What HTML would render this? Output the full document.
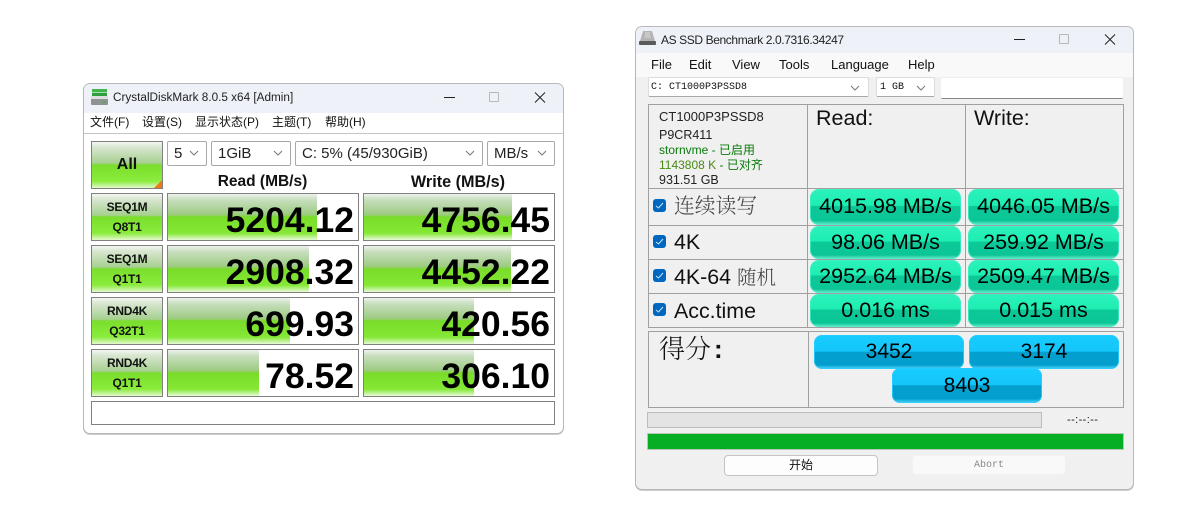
<!DOCTYPE html>
<html><head><meta charset="utf-8"><style>
html,body{margin:0;padding:0;background:#fff;width:1200px;height:518px;overflow:hidden}
body{position:relative;font-family:"Liberation Sans","Noto Sans CJK SC",sans-serif;color:#000}
div,span.a,svg{position:absolute;box-sizing:border-box}
.t{white-space:nowrap}
.combo{background:#fff;border:1px solid #a8a8a8;border-radius:2px;font-size:15px;color:#222;line-height:23px;padding-left:6px;white-space:nowrap;height:25px;top:141px}
.chev{width:10px;height:6px;top:8px;right:7px}
.lab{left:91px;width:72px;height:48px;border:1px solid #808080;background:linear-gradient(#f4f6f2 0,#d8e6d0 12%,#a6d090 46%,#7ade2c 50%,#8aec3c 85%,#e4f8d0 100%);text-align:center;font-size:12px;font-weight:bold;color:#111;line-height:20px;padding-top:3px;letter-spacing:-.25px}
.cell{height:48px;width:192px;border:1px solid #808080;background:#fff;overflow:hidden}
.bar{left:0;top:0;bottom:0;background:linear-gradient(#eef3ec 0,#c9dfc0 12%,#9ccb80 45%,#78dc28 50%,#84e834 85%,#e8fad8 100%)}
.num{right:4px;top:6px;font-size:35.5px;font-weight:bold;line-height:40px;color:#000;white-space:nowrap}
.tb{background:#f0f0f0;border:1px solid #a0a0a0}
.g{width:150px;height:36px;border-radius:9px;background:linear-gradient(#2cf2bb 0,#1eeeb2 46%,#0cc998 48%,#0bc596 88%,#6ff0cf 100%);box-shadow:inset 0 0 0 1px rgba(70,240,200,.7);text-align:center;font-size:21.5px;line-height:35px;color:#000;white-space:nowrap}
.b{width:150px;height:34px;border-radius:8px;background:linear-gradient(#18ccff 0,#14c6fa 48%,#03a0cf 50%,#039ecd 88%,#4fd8ff 100%);box-shadow:inset 0 0 0 1px rgba(40,205,255,.8);text-align:center;font-size:21px;line-height:33px;color:#000}
.cb{left:653px;width:13px;height:13px;border-radius:3px;background:#0067c0}
.rl{left:674px;font-size:21.4px;line-height:24px;color:#111;white-space:nowrap}
.s{font-family:"Noto Serif CJK SC",serif;color:#444;font-weight:300}
.m{top:57px;font-size:13px;line-height:16px;color:#111}
.cm{top:113px;font-size:12px;line-height:18px;color:#111;white-space:nowrap}
</style></head><body>

<!-- CrystalDiskMark -->
<div style="left:83px;top:83px;width:481px;height:351px;background:#fff;border:1px solid #b8b8b8;border-radius:7px;box-shadow:0 1px 0 #ccc;overflow:hidden">
<div style="left:0;top:0;width:100%;height:29px;background:#eef2f8"></div>
<div style="left:0;top:49px;width:100%;height:1px;background:#c4c4c4"></div>
</div>
<svg style="left:91px;top:89px" width="17" height="17" viewBox="0 0 17 17"><rect x="1" y="0" width="15" height="3" fill="#3fb54a"/><rect x="1" y="3" width="15" height="1" fill="#a8dcae"/><rect x="1" y="4" width="15" height="3" fill="#2f9e3e"/><rect x="0" y="7" width="17" height="9" rx="1" fill="#8f9492"/><rect x="0" y="7" width="17" height="3" fill="#dcdfdd"/><rect x="12" y="12" width="3" height="2" fill="#43b649"/></svg>
<div class="t" style="left:113px;top:90px;font-size:11.750px;line-height:16px;color:#222">CrystalDiskMark 8.0.5 x64 [Admin]</div>
<div style="left:444px;top:97px;width:11px;height:1px;background:#222"></div>
<div style="left:489px;top:92px;width:10px;height:10px;border:1px solid #b8b8b8;border-radius:1px"></div>
<svg style="left:534px;top:92px" width="12" height="11" viewBox="0 0 12 11"><path d="M1 .5 11 10.5M11 .5 1 10.5" stroke="#222" stroke-width="1" fill="none"/></svg>
<div class="cm" style="left:90px">文件(F)</div>
<div class="cm" style="left:142px">设置(S)</div>
<div class="cm" style="left:195px">显示状态(P)</div>
<div class="cm" style="left:272px">主题(T)</div>
<div class="cm" style="left:325px">帮助(H)</div>

<div class="lab" style="top:141px;font-size:16px;line-height:46px;padding:0;color:#111;letter-spacing:0">All</div>
<svg style="left:153px;top:179px" width="10" height="10"><path d="M9 1V9H1Z" fill="#f07818"/></svg>

<div class="combo" style="left:167px;width:40px">5<svg class="chev" viewBox="0 0 10 6"><path d="M1 1 5 5 9 1" stroke="#777" fill="none"/></svg></div>
<div class="combo" style="left:211px;width:80px">1GiB<svg class="chev" viewBox="0 0 10 6"><path d="M1 1 5 5 9 1" stroke="#777" fill="none"/></svg></div>
<div class="combo" style="left:295px;width:188px">C: 5% (45/930GiB)<svg class="chev" viewBox="0 0 10 6"><path d="M1 1 5 5 9 1" stroke="#777" fill="none"/></svg></div>
<div class="combo" style="left:487px;width:68px">MB/s<svg class="chev" viewBox="0 0 10 6"><path d="M1 1 5 5 9 1" stroke="#777" fill="none"/></svg></div>

<div class="t" style="left:166.500px;width:192px;top:172px;text-align:center;font-size:15.500px;font-weight:bold;line-height:20px;color:#111">Read (MB/s)</div>
<div class="t" style="left:362px;width:192px;top:172px;text-align:center;font-size:16.200px;font-weight:bold;line-height:20px;color:#111">Write (MB/s)</div>

<div class="lab" style="top:193px">SEQ1M<br>Q8T1</div>
<div class="cell" style="left:167px;top:193px"><div class="bar" style="width:149px"></div><div class="num">5204.12</div></div>
<div class="cell" style="left:363px;top:193px"><div class="bar" style="width:148px"></div><div class="num">4756.45</div></div>

<div class="lab" style="top:245px">SEQ1M<br>Q1T1</div>
<div class="cell" style="left:167px;top:245px"><div class="bar" style="width:141px"></div><div class="num">2908.32</div></div>
<div class="cell" style="left:363px;top:245px"><div class="bar" style="width:147px"></div><div class="num">4452.22</div></div>

<div class="lab" style="top:297px">RND4K<br>Q32T1</div>
<div class="cell" style="left:167px;top:297px"><div class="bar" style="width:122px"></div><div class="num">699.93</div></div>
<div class="cell" style="left:363px;top:297px"><div class="bar" style="width:110px"></div><div class="num">420.56</div></div>

<div class="lab" style="top:349px">RND4K<br>Q1T1</div>
<div class="cell" style="left:167px;top:349px"><div class="bar" style="width:91px"></div><div class="num">78.52</div></div>
<div class="cell" style="left:363px;top:349px"><div class="bar" style="width:110px"></div><div class="num">306.10</div></div>

<div style="left:91px;top:401px;width:464px;height:24px;border:1px solid #808080;background:#fff"></div>

<!-- AS SSD -->
<div style="left:635px;top:26px;width:499px;height:464px;background:#f0f0f0;border:1px solid #b8b8b8;border-radius:7px;box-shadow:0 1px 0 #ccc;overflow:hidden">
<div style="left:0;top:0;width:100%;height:26px;background:#eef2f8"></div>
<div style="left:0;top:26px;width:100%;height:24px;background:#f9f9f9"></div>
</div>
<svg style="left:639px;top:31px" width="17" height="14" viewBox="0 0 17 14"><path d="M4 0H13L16 10H1Z" fill="#b4b4b4"/><path d="M6 2h5M6 4h5M5.500 6h6" stroke="#dcdcdc" stroke-width="1"/><rect x="0" y="10" width="17" height="4" rx="1" fill="#5a5a5a"/></svg>
<div class="t" style="left:661px;top:32px;font-size:12px;line-height:16px;color:#222;letter-spacing:-.39px">AS SSD Benchmark 2.0.7316.34247</div>
<div style="left:1014px;top:39px;width:11px;height:1px;background:#222"></div>
<div style="left:1059px;top:34px;width:10px;height:10px;border:1px solid #b8b8b8;border-radius:1px"></div>
<svg style="left:1104px;top:34px" width="12" height="11" viewBox="0 0 12 11"><path d="M1 .5 11 10.500M11 .5 1 10.500" stroke="#222" fill="none"/></svg>
<div class="m" style="left:651px">File</div>
<div class="m" style="left:689px">Edit</div>
<div class="m" style="left:732px">View</div>
<div class="m" style="left:779px">Tools</div>
<div class="m" style="left:831px">Language</div>
<div class="m" style="left:908px">Help</div>

<div class="t" style="left:648px;top:77px;width:221px;height:20px;background:#fff;border:1px solid #dcdcdc;border-bottom-color:#a8a8a8;border-radius:2px;font-family:'Liberation Mono',monospace;font-size:10px;line-height:19px;padding-left:2px;color:#111">C: CT1000P3PSSD8<svg class="chev" style="top:7px;right:8px" viewBox="0 0 10 6"><path d="M1 1 5 5 9 1" stroke="#777" fill="none"/></svg></div>
<div class="t" style="left:876px;top:77px;width:59px;height:20px;background:#fff;border:1px solid #dcdcdc;border-bottom-color:#a8a8a8;border-radius:2px;font-family:'Liberation Mono',monospace;font-size:10px;line-height:19px;padding-left:3px;color:#111">1 GB<svg class="chev" style="top:7px;right:8px" viewBox="0 0 10 6"><path d="M1 1 5 5 9 1" stroke="#777" fill="none"/></svg></div>
<div style="left:941px;top:78px;width:182px;height:21px;background:#fff;border-bottom:1px solid #888;border-radius:2px"></div>

<div class="tb" style="left:648px;top:104px;width:160px;height:85px"></div>
<div class="tb" style="left:807px;top:104px;width:159px;height:85px"></div>
<div class="tb" style="left:965px;top:104px;width:159px;height:85px"></div>
<div class="t" style="left:659px;top:109px;font-size:13px;line-height:16px;color:#222">CT1000P3PSSD8</div>
<div class="t" style="left:659px;top:127px;font-size:12.500px;line-height:16px;color:#222">P9CR411</div>
<div class="t" style="left:659px;top:143px;font-size:12px;line-height:15px;color:#0a7a0a">stornvme - 已启用</div>
<div class="t" style="left:659px;top:158px;font-size:12px;line-height:15px;color:#0a7a0a"><span style="color:#4a8a14">1143808 K</span> - 已对齐</div>
<div class="t" style="left:659px;top:172px;font-size:12.500px;line-height:16px;color:#222">931.51 GB</div>
<div class="t" style="left:816px;top:105px;font-size:21.500px;line-height:26px;color:#111">Read:</div>
<div class="t" style="left:974px;top:105px;font-size:21.500px;line-height:26px;color:#111">Write:</div>

<div class="tb" style="left:648px;top:188px;width:160px;height:38px"></div>
<div class="tb" style="left:807px;top:188px;width:159px;height:38px"></div>
<div class="tb" style="left:965px;top:188px;width:159px;height:38px"></div>
<div class="tb" style="left:648px;top:225px;width:160px;height:35px"></div>
<div class="tb" style="left:807px;top:225px;width:159px;height:35px"></div>
<div class="tb" style="left:965px;top:225px;width:159px;height:35px"></div>
<div class="tb" style="left:648px;top:259px;width:160px;height:35px"></div>
<div class="tb" style="left:807px;top:259px;width:159px;height:35px"></div>
<div class="tb" style="left:965px;top:259px;width:159px;height:35px"></div>
<div class="tb" style="left:648px;top:293px;width:160px;height:35px"></div>
<div class="tb" style="left:807px;top:293px;width:159px;height:35px"></div>
<div class="tb" style="left:965px;top:293px;width:159px;height:35px"></div>

<div class="cb" style="top:199px"></div><div class="cb" style="top:235px"></div><div class="cb" style="top:269px"></div><div class="cb" style="top:303px"></div>
<svg style="left:655px;top:201px" width="9" height="9"><path d="M1 5 3.500 7 8 2" stroke="#cfe4f7" fill="none"/></svg>
<svg style="left:655px;top:237px" width="9" height="9"><path d="M1 5 3.500 7 8 2" stroke="#cfe4f7" fill="none"/></svg>
<svg style="left:655px;top:271px" width="9" height="9"><path d="M1 5 3.500 7 8 2" stroke="#cfe4f7" fill="none"/></svg>
<svg style="left:655px;top:305px" width="9" height="9"><path d="M1 5 3.500 7 8 2" stroke="#cfe4f7" fill="none"/></svg>
<div class="rl s" style="top:192px;font-size:20.800px">连续读写</div>
<div class="rl" style="top:230px">4K</div>
<div class="rl" style="top:264px">4K-64 <span class="s" style="font-size:19.500px">随机</span></div>
<div class="rl" style="top:299px">Acc.time</div>

<div class="g" style="left:810px;top:189px;width:151px">4015.98 MB/s</div>
<div class="g" style="left:968px;top:189px;width:151px">4046.05 MB/s</div>
<div class="g" style="left:810px;top:226px;width:151px;height:33px;line-height:33px">98.06 MB/s</div>
<div class="g" style="left:968px;top:226px;width:151px;height:33px;line-height:33px">259.92 MB/s</div>
<div class="g" style="left:810px;top:260px;width:151px;height:33px;line-height:33px">2952.64 MB/s</div>
<div class="g" style="left:968px;top:260px;width:151px;height:33px;line-height:33px">2509.47 MB/s</div>
<div class="g" style="left:810px;top:294px;width:151px;height:33px;line-height:33px">0.016 ms</div>
<div class="g" style="left:968px;top:294px;width:151px;height:33px;line-height:33px">0.015 ms</div>

<div class="tb" style="left:648px;top:331px;width:161px;height:77px"></div>
<div class="tb" style="left:808px;top:331px;width:316px;height:77px"></div>
<div class="t s" style="left:659px;top:328px;font-size:26px;line-height:40px;color:#111">得分<span style="font-family:'Liberation Sans',sans-serif;font-weight:bold;margin-left:3px">:</span></div>
<div class="b" style="left:814px;top:335px">3452</div>
<div class="b" style="left:969px;top:335px">3174</div>
<div class="b" style="left:892px;top:368px;height:35px;line-height:35px">8403</div>

<div style="left:647px;top:412px;width:395px;height:16px;background:#e4e4e4;border:1px solid #bcbcbc"></div>
<div class="t" style="left:1067px;top:414px;font-size:11px;line-height:13px;letter-spacing:.4px;color:#111">--:--:--</div>
<div style="left:647px;top:433px;width:477px;height:17px;background:#06ae24;border:1px solid #b8c8b8"></div>
<div style="left:724px;top:455px;width:154px;height:21px;background:#fdfdfd;border:1px solid #c4c4c4;border-radius:4px;text-align:center;font-size:12px;line-height:19px;color:#111">开始</div>
<div style="left:912px;top:455px;width:154px;height:20px;background:#f9f9f9;border:1px solid #f2f2f2;border-radius:4px;text-align:center;font-family:'Liberation Mono',monospace;font-size:10px;line-height:19px;color:#888">Abort</div>
</body></html>
